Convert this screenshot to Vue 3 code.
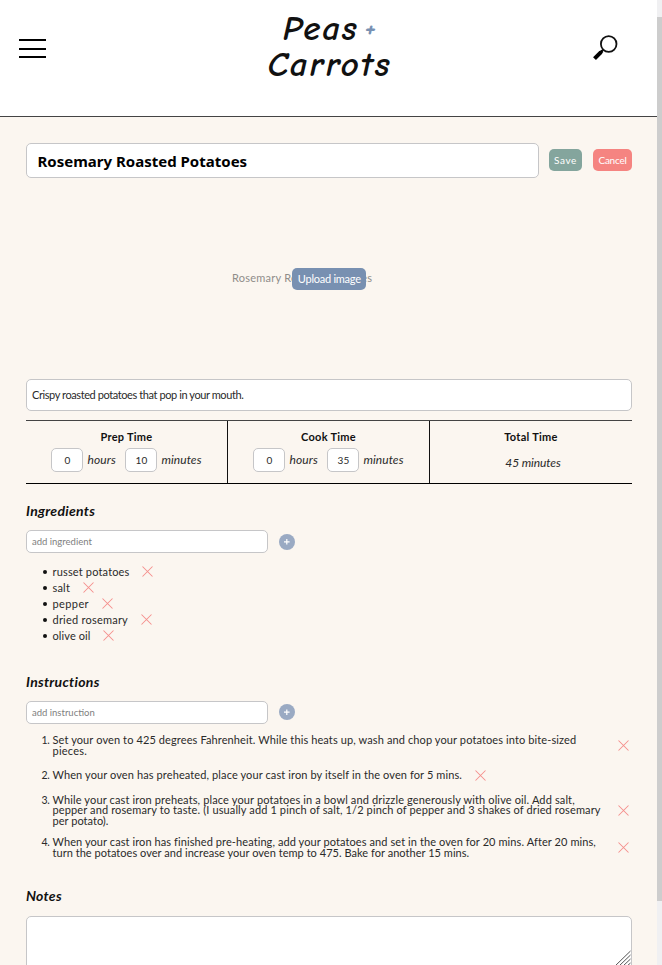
<script setup>
import { ref } from 'vue'

const title = ref('Rosemary Roasted Potatoes')
const description = ref('Crispy roasted potatoes that pop in your mouth.')
const times = ref([
  { label: 'Prep Time', hours: 0, minutes: 10 },
  { label: 'Cook Time', hours: 0, minutes: 35 }
])
const ingredients = ref([
  { name: 'russet potatoes', tracking: 0.163 },
  { name: 'salt', tracking: 0.183 },
  { name: 'pepper', tracking: 0.397 },
  { name: 'dried rosemary', tracking: 0.224 },
  { name: 'olive oil', tracking: 0.101 }
])
const instructions = ref([
  [
    { text: 'Set your oven to 425 degrees Fahrenheit. While this heats up, wash and chop your potatoes into bite-sized', tracking: 0.113 },
    { text: 'pieces.', tracking: 0.224 }
  ],
  [{ text: 'When your oven has preheated, place your cast iron by itself in the oven for 5 mins.', tracking: 0.11 }],
  [
    { text: 'While your cast iron preheats, place your potatoes in a bowl and drizzle generously with olive oil. Add salt,', tracking: 0.135 },
    { text: 'pepper and rosemary to taste. (I usually add 1 pinch of salt, 1/2 pinch of pepper and 3 shakes of dried rosemary', tracking: 0.126 },
    { text: 'per potato).', tracking: 0.03 }
  ],
  [
    { text: 'When your cast iron has finished pre-heating, add your potatoes and set in the oven for 20 mins. After 20 mins,', tracking: 0.088 },
    { text: 'turn the potatoes over and increase your oven temp to 475. Bake for another 15 mins.', tracking: 0.036 }
  ]
])
</script>

<template>
  <div class="window">
    <div class="page">
      <header class="header">
        <svg class="menu" viewBox="0 0 27 20" shape-rendering="crispEdges">
          <path d="M0 0h27v2H0zM0 9h27v2H0zM0 17h27v2H0z" />
        </svg>
        <h1 class="logo"><span class="logo-top">Peas <b class="plus">+</b></span><span class="logo-bottom">Carrots</span></h1>
        <svg class="search" viewBox="0 0 28 28">
          <circle cx="16.7" cy="10" r="7.8" fill="#fff" stroke="#111" stroke-width="1.8" />
          <path d="M11.3 15.6L9.6 17.4" stroke="#111" stroke-width="2" />
          <path d="M10.4 16.9L8 19" stroke="#000" stroke-width="3" />
          <path d="M9 18.1L2.5 24.6" stroke="#000" stroke-width="4" />
        </svg>
      </header>

      <main class="content">
        <div class="title-row">
          <div class="field title-field">{{ title }}</div>
          <button class="btn save">Save</button>
          <button class="btn cancel">Cancel</button>
        </div>

        <div class="photo">
          <span class="alt">{{ title }}</span>
          <button class="btn upload">Upload image</button>
        </div>

        <div class="field description">{{ description }}</div>

        <section class="times">
          <div v-for="t in times" :key="t.label" class="time">
            <h3>{{ t.label }}</h3>
            <div class="time-row">
              <div class="field num">{{ t.hours }}</div><i class="hours">hours</i>
              <div class="field num">{{ t.minutes }}</div><i class="minutes">minutes</i>
            </div>
          </div>
          <div class="time total">
            <h3>Total Time</h3>
            <i>45 minutes</i>
          </div>
        </section>

        <h2>Ingredients</h2>
        <div class="add-row">
          <div class="field add">add ingredient</div>
          <button class="plus-btn"><svg viewBox="0 0 16 16"><path d="M5 7.8h5.6M7.8 5v5.6" /></svg></button>
        </div>
        <ul class="ingredients">
          <li v-for="item in ingredients" :key="item.name">
            <span class="dot"></span>
            <span :style="{ letterSpacing: item.tracking + 'px' }">{{ item.name }}</span>
            <svg class="x" viewBox="0 0 11 11"><path d="M.5 .5l10 10M10.5 .5l-10 10" /></svg>
          </li>
        </ul>

        <h2 class="instructions-title">Instructions</h2>
        <div class="add-row">
          <div class="field add add-instruction">add instruction</div>
          <button class="plus-btn lifted"><svg viewBox="0 0 16 16"><path d="M5 8.2h5.6M7.8 5.4v5.6" /></svg></button>
        </div>
        <ol class="instructions">
          <li v-for="(lines, i) in instructions" :key="i" :class="{ single: lines.length === 1 }">
            <span class="index">{{ i + 1 }}.</span>
            <p>
              <span v-for="line in lines" :key="line.text" class="line" :style="{ letterSpacing: line.tracking + 'px' }">{{ line.text }}</span>
            </p>
            <svg class="x" viewBox="0 0 11 11"><path d="M.5 .5l10 10M10.5 .5l-10 10" /></svg>
          </li>
        </ol>

        <h2 class="notes-title">Notes</h2>
        <div class="field notes">
          <svg class="grip" viewBox="0 0 16 16"><path d="M0 16L15.5 1M4 16L15.5 5M8 16l7.5-7M12 16l3.5-3" /></svg>
        </div>
      </main>
    </div>
    <div class="scrollbar"><div class="thumb"></div></div>
  </div>
</template>

<style>
body {
  overflow: hidden;
}
</style>

<style scoped>
.window {
  display: flex;
  width: 662px;
  height: 965px;
  overflow: hidden;
  font-family: Lato, "Open Sans", sans-serif;
  font-size: 11px;
  color: #2a2a2a;
}
.window * {
  box-sizing: border-box;
}
.page {
  width: 657px;
  background: #fbf6f0;
}
.scrollbar {
  width: 5px;
  padding-top: 17px;
  background: #f0f0f2;
}
.thumb {
  height: 884px;
  background: #cdcdcd;
}
.header {
  display: flex;
  justify-content: space-between;
  align-items: flex-start;
  height: 117px;
  padding: 0 37px 0 19px;
  background: #fff;
  border-bottom: 1px solid #444;
}
.menu {
  width: 27px;
  height: 20px;
  margin-top: 39px;
}
.search {
  width: 28px;
  height: 28px;
  margin-top: 34px;
}
.logo {
  display: flex;
  flex-direction: column;
  align-items: center;
  margin: 11px 0 0 21px;
  font: italic 600 35px/36px "Comic Neue", fantasy;
  color: #111;
}
.logo span {
  white-space: nowrap;
}
.logo-top {
  letter-spacing: 1.8px;
  word-spacing: -8px;
}
.logo-bottom {
  letter-spacing: 2px;
}
.plus {
  font-size: 26px;
  line-height: 0;
  letter-spacing: 0;
  vertical-align: 4px;
  color: #7891b3;
}
.content {
  padding: 26px 25px 0 26px;
}
.field {
  background: #fff;
  border: 1px solid #c6c6c8;
  border-radius: 5px;
  white-space: nowrap;
}
.title-row {
  display: flex;
  align-items: center;
  height: 35px;
}
.title-field {
  width: 513px;
  height: 35px;
  margin-right: 10px;
  padding-left: 10.5px;
  font: bold 15px/35px "Noto Sans", sans-serif;
  color: #000;
}
.btn {
  height: 22px;
  padding: 0;
  border: 0;
  border-radius: 5px;
  font: 10px/22px Lato, sans-serif;
  text-align: center;
  white-space: nowrap;
  color: #fff;
}
.title-row .btn {
  margin-bottom: 1px;
}
.save {
  width: 33px;
  margin-right: 11px;
  background: #84a59d;
  letter-spacing: 0.6px;
}
.cancel {
  width: 39px;
  background: #f58481;
  letter-spacing: -0.25px;
}
.photo {
  display: flex;
  align-items: center;
  height: 201px;
  padding-left: 206px;
}
.alt {
  padding-bottom: 2px;
  letter-spacing: 0.24px;
  white-space: nowrap;
  color: #8f8d8a;
}
.upload {
  width: 74px;
  margin-left: -80px;
  padding-bottom: 1px;
  background: #7890b1;
  font-size: 11px;
  line-height: 21px;
  letter-spacing: -0.25px;
}
.description {
  height: 32px;
  padding-left: 5px;
  line-height: 30px;
  letter-spacing: -0.41px;
}
.times {
  display: grid;
  grid-template-columns: 202px 202px 202px;
  height: 64px;
  margin-top: 9px;
  border-top: 1px solid #444;
  border-bottom: 1px solid #000;
}
.time {
  display: flex;
  flex-direction: column;
  align-items: center;
  padding: 9px 0 0;
  border-right: 1px solid #111;
}
.total {
  border-right: 0;
}
.time h3 {
  margin: 0;
  font-size: 11px;
  line-height: 14px;
  letter-spacing: 0.27px;
  color: #111;
}
.time i {
  font-size: 12px;
}
.time-row {
  display: flex;
  align-items: center;
  margin-top: 4px;
}
.time-row i {
  padding: 0 0 1px 4px;
}
.num {
  width: 32px;
  height: 24px;
  line-height: 22px;
  font-size: 10px;
  text-align: center;
}
.hours {
  width: 38px;
  letter-spacing: 0.14px;
}
.minutes {
  letter-spacing: 0.08px;
}
.hours + .num {
  margin-left: 4px;
}
.time.total i {
  margin: 12px 0 0 4px;
  line-height: 14px;
  letter-spacing: -0.1px;
}
h2 {
  margin: 18px 0 10px;
  font-size: 14px;
  font-style: italic;
  font-weight: 700;
  line-height: 18px;
  letter-spacing: 0.28px;
  color: #111;
}
.add-row {
  display: flex;
  align-items: center;
}
.add {
  width: 242px;
  height: 23px;
  margin-right: 11px;
  padding-left: 5px;
  font-size: 9.5px;
  line-height: 21px;
  color: #808080;
}
.plus-btn {
  width: 16px;
  height: 16px;
  padding: 0;
  border: 0;
  border-radius: 50%;
  background: #9aaac3;
}
.lifted {
  margin-bottom: 1px;
}
.plus-btn svg {
  display: block;
  width: 16px;
  height: 16px;
  stroke: #fff;
  stroke-width: 1.2;
}
ul,
ol {
  margin: 0;
  padding: 0;
  list-style: none;
}
.ingredients {
  margin-top: 10px;
}
.ingredients li {
  display: flex;
  align-items: center;
  height: 16px;
  padding-left: 17px;
}
.dot {
  width: 4px;
  height: 4px;
  margin: 2px 5.5px 0 0;
  border-radius: 50%;
  background: #111;
}
.x {
  flex: none;
  width: 11px;
  height: 11px;
  margin-left: 12.5px;
  fill: none;
  stroke: #f58f8c;
  stroke-width: 1.05;
}
.instructions-title {
  margin-top: 30px;
}
.instructions {
  display: flex;
  flex-direction: column;
  gap: 11px;
  margin-top: 11.4px;
}
.instructions li {
  display: flex;
  align-items: center;
  padding-left: 14px;
}
.instructions .index {
  align-self: flex-start;
  width: 12.5px;
  padding-right: 3px;
  font-size: 10.5px;
  line-height: 10.6px;
  letter-spacing: -0.3px;
  text-align: right;
}
.instructions p {
  flex: 1;
  margin: 0;
}
.instructions .single {
  height: 16px;
}
.instructions .single .index {
  align-self: center;
}
.instructions .single p {
  flex: none;
}
.line {
  display: block;
  line-height: 10.6px;
  white-space: nowrap;
}
.instructions .x {
  margin-right: 3px;
}
.notes-title {
  margin-top: 28px;
  margin-bottom: 11px;
}
.notes {
  display: flex;
  justify-content: flex-end;
  align-items: flex-start;
  height: 70px;
}
.grip {
  width: 16px;
  height: 16px;
  margin-top: 33px;
  fill: none;
  stroke: #555;
  stroke-width: 1;
}
</style>
